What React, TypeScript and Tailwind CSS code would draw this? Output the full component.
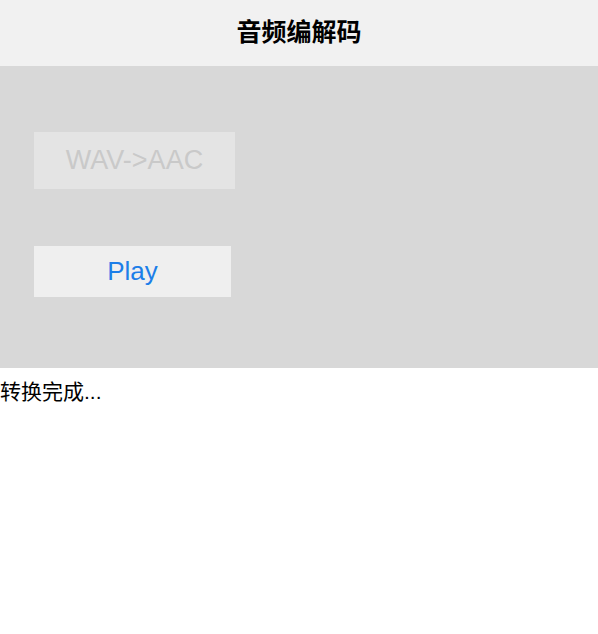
export default function App() {
  return (
    <div
      className="flex h-[634px] w-[598px] flex-col bg-white"
      style={{ fontFamily: '"Liberation Sans", "Noto Sans CJK SC", sans-serif' }}
    >
      <header className="flex h-[66px] items-center justify-center bg-[#f1f1f1]">
        <h1 className="text-[25px] font-semibold text-black">音频编解码</h1>
      </header>
      <main className="flex h-[302px] flex-col items-start bg-[#d8d8d8] px-[34px] pt-[66px]">
        <button
          disabled
          className="flex h-[57px] w-[201px] items-center justify-center bg-[#e4e4e4] text-[27px] text-[#c9c9c9]"
        >
          WAV-&gt;AAC
        </button>
        <button className="mt-[57px] flex h-[51px] w-[197px] items-center justify-center bg-[#efefef] text-[26px] text-[#1c7ee8]">
          Play
        </button>
      </main>
      <p className="pt-[11px] text-[21px] leading-[26px] text-black">转换完成...</p>
    </div>
  );
}
